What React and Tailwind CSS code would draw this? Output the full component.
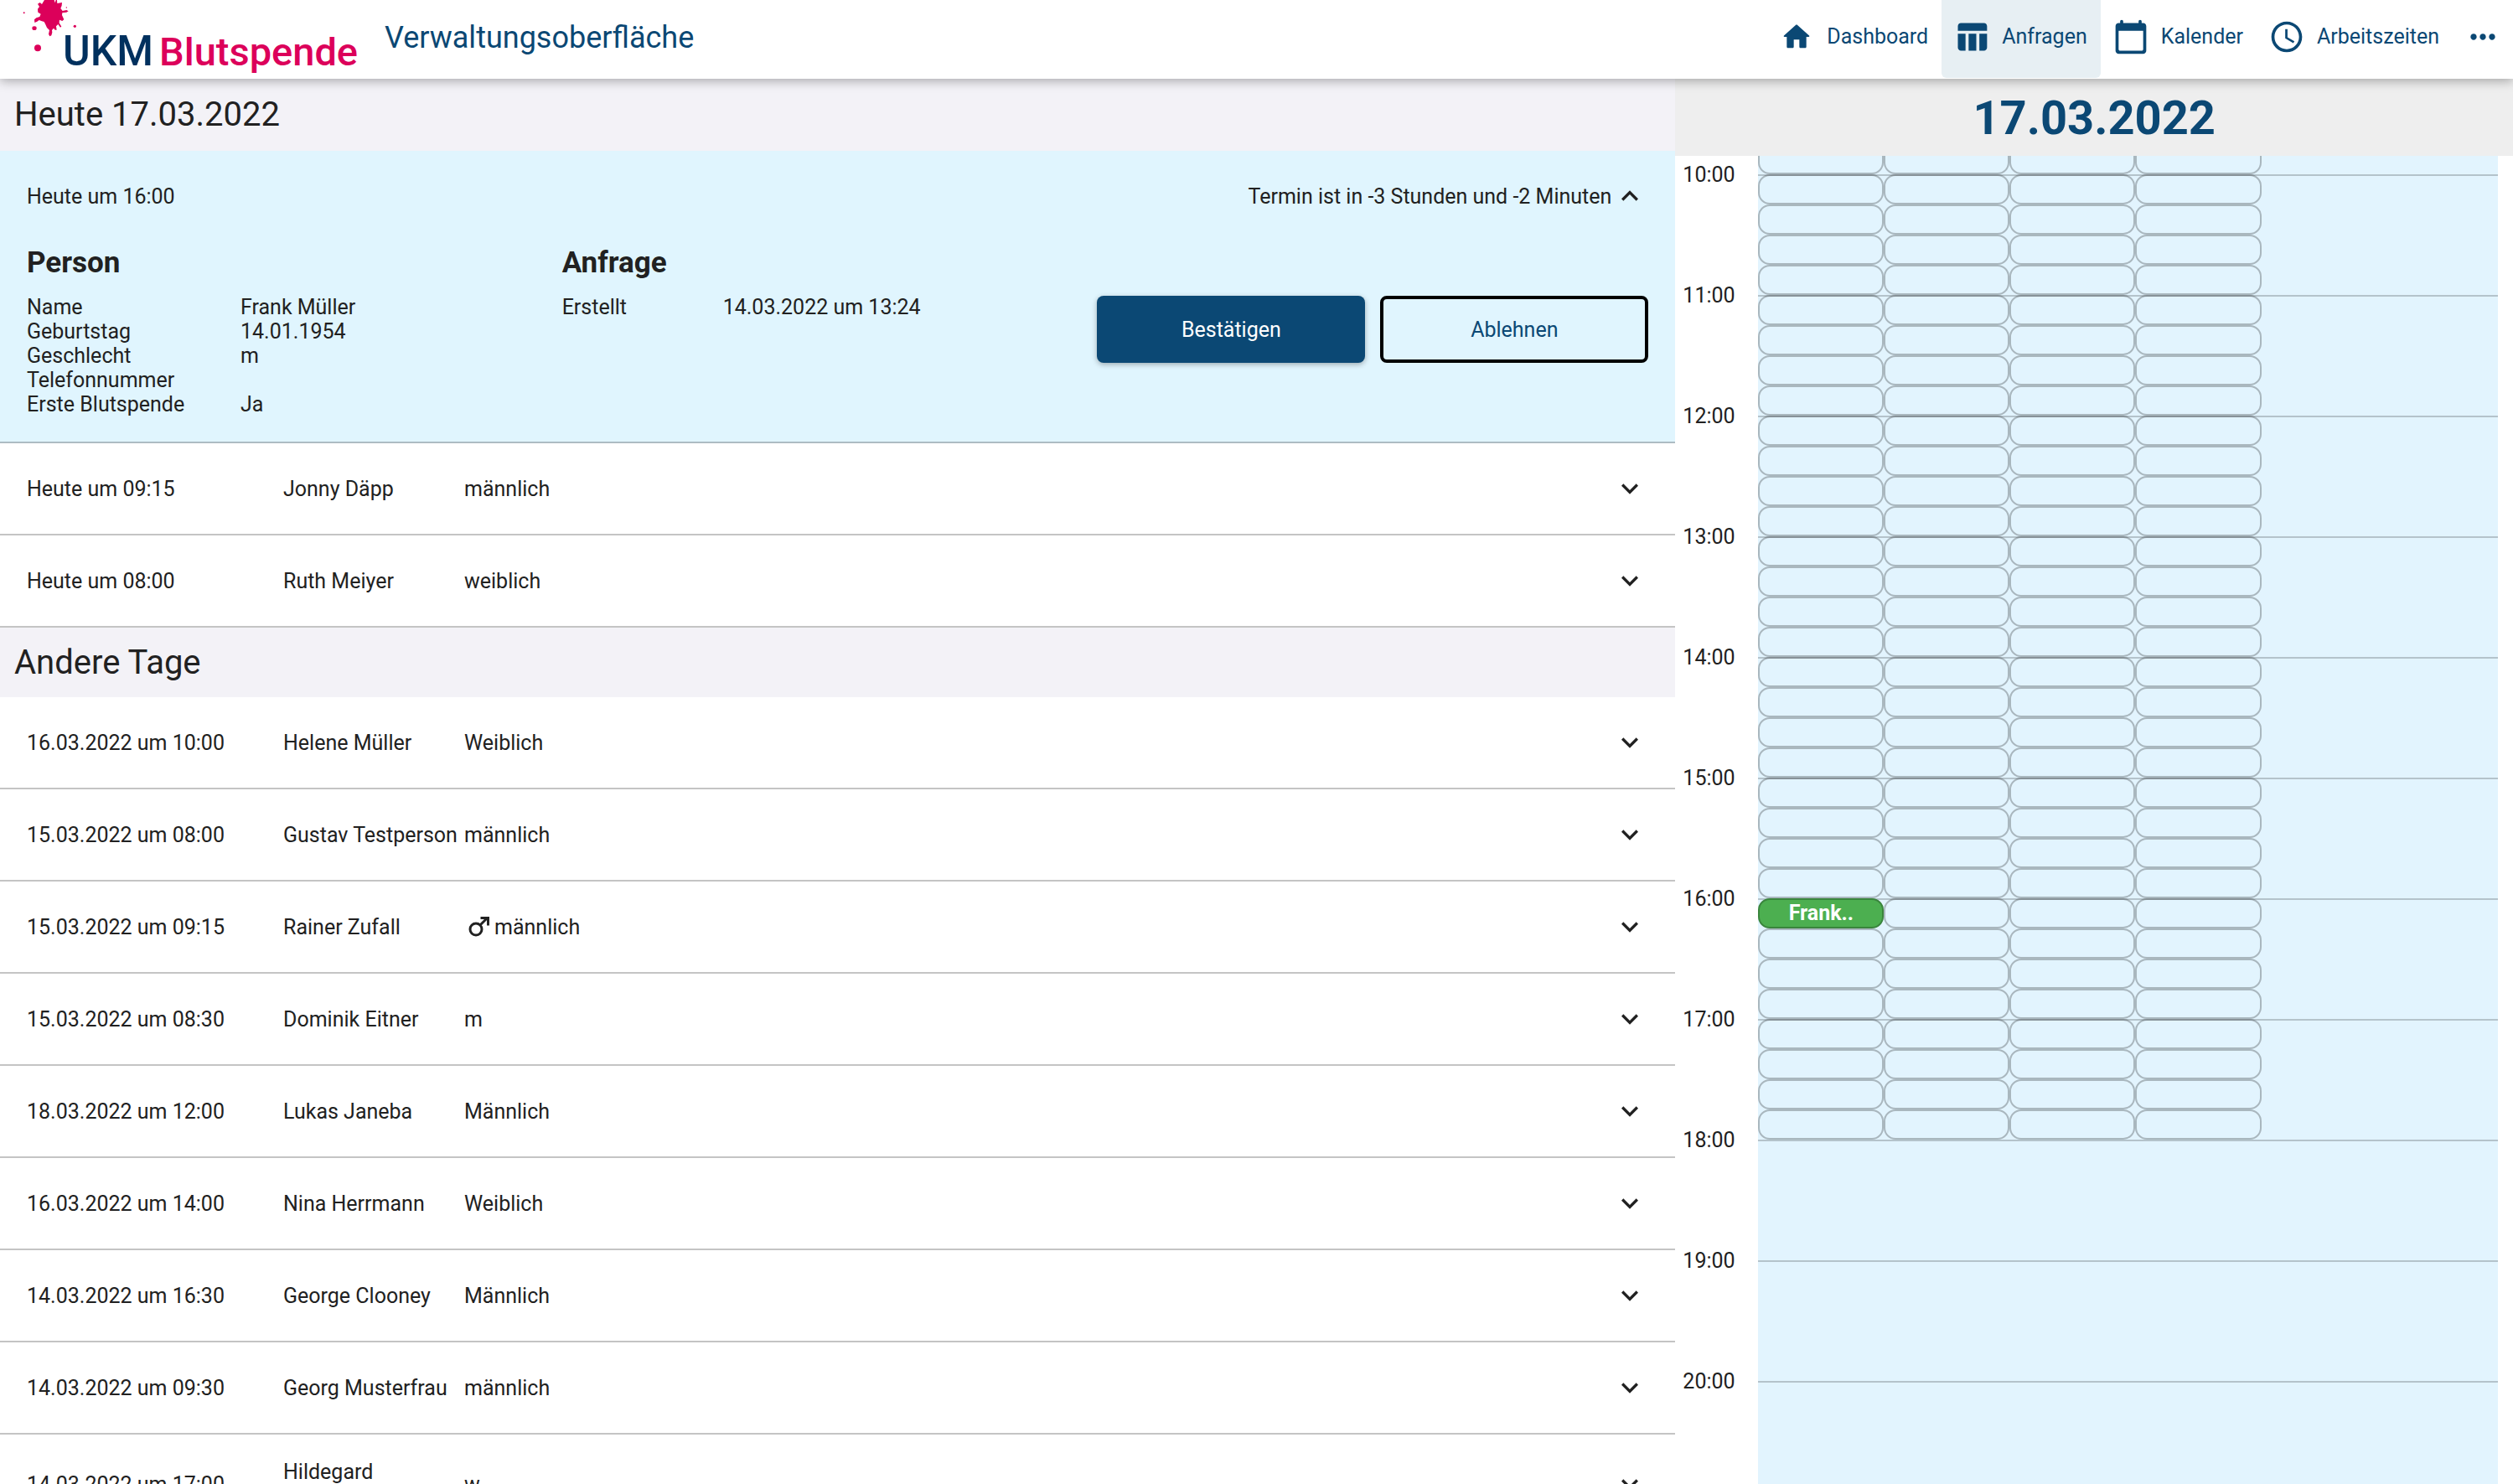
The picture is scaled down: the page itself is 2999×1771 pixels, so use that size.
import React from "react";
import { MdExpandMore, MdExpandLess, MdTableChart, MdSchedule, MdMoreHoriz } from "react-icons/md";

function Logo() {
  return (
    <svg width="430" height="94" viewBox="0 0 430 94" role="img" aria-label="UKM Blutspende">
      <g fill="#dc005a" transform="scale(0.3333)">
        <path d="M135 14L143 9L150 15L154 8L159 0H194L197 10L200 0H204L205 12L222 9L221 20L217 30L224 39L238 36L245 40L238 44L223 46L222 54L229 70L223 75L213 71L212 82L220 95L216 98L208 87L201 94L203 107L197 107L192 101L186 108L187 116L184 127L178 130L174 122L177 108L168 99L163 88L158 78L150 76L140 72L133 77L124 81L123 70L130 64L142 60L146 50L136 44L135 32L141 24Z" />
        <ellipse cx="123" cy="101" rx="8" ry="7" />
        <circle cx="135" cy="172" r="12" />
        <circle cx="268" cy="94" r="5" />
        <circle cx="86" cy="46" r="3" />
        <circle cx="238" cy="27" r="2" />
      </g>
      <g fontFamily="Roboto, sans-serif" fontWeight="500">
        <text x="75" y="78" fill="#00305e" fontSize="50">UKM</text>
        <text x="190" y="78" fill="#dc005a" fontSize="47">Blutspende</text>
      </g>
    </svg>
  );
}

function HomeIcon() {
  return (
    <span className="flex w-11 justify-center">
      <svg className="size-10" viewBox="0 0 24 24" fill="currentColor" aria-hidden="true">
        <path d="M10 19v-5h4v5c0 .55.45 1 1 1h3c.55 0 1-.45 1-1v-7h1.7c.46 0 .68-.57.33-.87L12.67 3.6c-.38-.34-.96-.34-1.34 0l-8.36 7.53c-.34.3-.13.87.33.87H5v7c0 .55.45 1 1 1h3c.55 0 1-.45 1-1z" />
      </svg>
    </span>
  );
}

function CalendarIcon() {
  return (
    <svg className="size-11" viewBox="0 0 24 24" fill="currentColor" aria-hidden="true">
      <path d="M20 3h-1V2c0-.55-.45-1-1-1s-1 .45-1 1v1H7V2c0-.55-.45-1-1-1s-1 .45-1 1v1H4c-1.1 0-2 .9-2 2v16c0 1.1.9 2 2 2h16c1.1 0 2-.9 2-2V5c0-1.1-.9-2-2-2zm-1 18H5c-.55 0-1-.45-1-1V8h16v12c0 .55-.45 1-1 1z" />
    </svg>
  );
}

const nav = [
  { label: "Dashboard", icon: <HomeIcon /> },
  { label: "Anfragen", icon: <MdTableChart className="size-11" />, active: true },
  { label: "Kalender", icon: <CalendarIcon /> },
  { label: "Arbeitszeiten", icon: <MdSchedule className="size-11" /> },
];

function Header() {
  return (
    <header className="relative z-10 flex h-[94px] shrink-0 items-center bg-white text-[#0b4874] shadow-[0_3px_12px_rgba(0,0,0,0.3)]">
      <a href="#start" className="shrink-0"><Logo /></a>
      <span className="ml-[29px] pb-1 text-[36px] leading-[42px]">Verwaltungsoberfläche</span>
      <nav className="ml-auto flex self-stretch">
        {nav.map((n) => (
          <a
            key={n.label}
            href={"#" + n.label.toLowerCase()}
            aria-current={n.active ? "page" : undefined}
            className={
              n.active
                ? "mb-px flex items-center gap-3.5 rounded-b-md bg-[#e7eff3] pr-4 pb-1.5 pl-3.5"
                : "mb-px flex items-center gap-3.5 pr-4 pb-1.5 pl-3.5"
            }
          >
            {n.icon}
            {n.label}
          </a>
        ))}
        <button type="button" aria-label="Mehr" className="mb-px px-3.5 pb-1.5">
          <MdMoreHoriz className="size-11" />
        </button>
      </nav>
    </header>
  );
}

const today = [
  { when: "Heute um 09:15", name: "Jonny Däpp", gender: "männlich" },
  { when: "Heute um 08:00", name: "Ruth Meiyer", gender: "weiblich" },
];

const others = [
  { when: "16.03.2022 um 10:00", name: "Helene Müller", gender: "Weiblich" },
  { when: "15.03.2022 um 08:00", name: "Gustav Testperson", gender: "männlich" },
  { when: "15.03.2022 um 09:15", name: "Rainer Zufall", gender: "männlich", male: true },
  { when: "15.03.2022 um 08:30", name: "Dominik Eitner", gender: "m" },
  { when: "18.03.2022 um 12:00", name: "Lukas Janeba", gender: "Männlich" },
  { when: "16.03.2022 um 14:00", name: "Nina Herrmann", gender: "Weiblich" },
  { when: "14.03.2022 um 16:30", name: "George Clooney", gender: "Männlich" },
  { when: "14.03.2022 um 09:30", name: "Georg Musterfrau", gender: "männlich" },
  { when: "14.03.2022 um 17:00", name: "Hildegard Musterfrau", gender: "w" },
];

function MaleIcon() {
  return (
    <svg className="ml-1 size-8" viewBox="0 0 32 32" fill="none" stroke="currentColor" strokeWidth="3" aria-hidden="true">
      <circle cx="10" cy="19" r="7" />
      <path d="M15 14L24 5M15.500 5.500H24.500V14.500" />
    </svg>
  );
}

function Row({ when, name, gender, male }) {
  return (
    <button
      type="button"
      aria-expanded="false"
      className="flex min-h-[110px] w-full items-center border-b-2 border-[#c4c4c4] py-[30px] pr-[34px] pl-8 text-left"
    >
      <span className="w-[306px] shrink-0">{when}</span>
      <span className="w-[216px] shrink-0">{name}</span>
      <span className="flex items-center">
        {male && <MaleIcon />}
        {gender}
      </span>
      <MdExpandMore className="ml-auto size-10" />
    </button>
  );
}

function SectionTitle({ children }) {
  return (
    <h2 className="flex h-[83px] shrink-0 items-center bg-[#f3f2f7] px-[17px] text-[40px] leading-[46px] first:h-[86px]">{children}</h2>
  );
}

const person = [
  ["Name", "Frank Müller"],
  ["Geburtstag", "14.01.1954"],
  ["Geschlecht", "m"],
  ["Telefonnummer", ""],
  ["Erste Blutspende", "Ja"],
];

function OpenRequest() {
  return (
    <article className="border-b-2 border-[#adbcc3] bg-[#e0f5fe] pb-[30px]">
      <button type="button" aria-expanded="true" className="flex h-[108px] w-full items-center justify-between pr-[34px] pl-8">
        <span>Heute um 16:00</span>
        <span className="flex items-center gap-0.5">
          Termin ist in -3 Stunden und -2 Minuten
          <MdExpandLess className="size-10" />
        </span>
      </button>
      <div className="flex px-8">
        <section className="w-[33%]">
          <h3 className="pt-1 text-[35px] leading-[44px] font-bold">Person</h3>
          <dl className="mt-4 grid grid-cols-[255px_1fr]">
            {person.map(([k, v]) => (
              <React.Fragment key={k}>
                <dt>{k}</dt>
                <dd>{v}</dd>
              </React.Fragment>
            ))}
          </dl>
        </section>
        <section>
          <h3 className="pt-1 text-[35px] leading-[44px] font-bold">Anfrage</h3>
          <dl className="mt-4 grid grid-cols-[192px_1fr]">
            <dt>Erstellt</dt>
            <dd>14.03.2022 um 13:24</dd>
          </dl>
        </section>
        <div className="ml-auto flex gap-[18px] pt-[65px]">
          <button type="button" className="h-20 w-80 rounded-lg bg-[#0b4874] text-white shadow-[0_2px_6px_rgba(0,0,0,0.3)]">
            Bestätigen
          </button>
          <button type="button" className="h-20 w-80 rounded-lg border-4 border-black text-[#0b4874]">
            Ablehnen
          </button>
        </div>
      </div>
    </article>
  );
}

const hours = [10, 11, 12, 13, 14, 15, 16, 17, 18, 19, 20];

function Slot({ hour, quarter, column }) {
  if (hour === 16 && quarter === 0 && column === 0) {
    return (
      <button type="button" className="h-9 rounded-[14px] border-2 border-[#3a853d] bg-[#4caf50] leading-8 font-bold text-white">
        Frank..
      </button>
    );
  }
  return (
    <button
      type="button"
      aria-label={`${hour}:${String(quarter * 15).padStart(2, "0")}, Platz ${column + 1}`}
      className="h-9 rounded-[14px] border-2 border-black/25"
    />
  );
}

function DayPlan() {
  return (
    <section className="flex flex-1 flex-col">
      <h2 className="flex h-[92px] shrink-0 items-center justify-center bg-[#eeeeee] pt-0.5 text-[56px] leading-[68px] font-bold text-[#0b4874]">
        17.03.2022
      </h2>
      <div className="flex min-h-0 flex-1 overflow-hidden pr-[18px]">
        <div className="w-[99px] shrink-0 pt-2 pl-[9px]">
          {hours.map((h) => (
            <div key={h} className="h-36">{h}:00</div>
          ))}
        </div>
        <div className="flex-1 bg-[#e2f4fe]">
          <div className="grid grid-cols-[repeat(4,17%)]">
            {[0, 1, 2, 3].map((c) => (
              <button
                key={c}
                type="button"
                aria-label={`9:45, Platz ${c + 1}`}
                className="h-[22px] rounded-b-[14px] border-2 border-t-0 border-black/25"
              />
            ))}
          </div>
          {hours.map((h) => (
            <div key={h} className="grid h-36 grid-cols-[repeat(4,17%)] content-start shadow-[inset_0_2px_0_rgba(0,0,0,0.2)]">
              {h < 18 &&
                [0, 1, 2, 3].map((q) =>
                  [0, 1, 2, 3].map((c) => <Slot key={q + "-" + c} hour={h} quarter={q} column={c} />)
                )}
            </div>
          ))}
        </div>
      </div>
    </section>
  );
}

export default function App() {
  return (
    <div className="flex h-screen flex-col overflow-hidden bg-white font-['Roboto',sans-serif] text-[25px] leading-[29px] text-[#212121]">
      <Header />
      <main className="flex min-h-0 flex-1">
        <div className="w-2/3 overflow-hidden">
          <SectionTitle>Heute 17.03.2022</SectionTitle>
          <OpenRequest />
          {today.map((r) => <Row key={r.when + r.name} {...r} />)}
          <SectionTitle>Andere Tage</SectionTitle>
          {others.map((r) => <Row key={r.when + r.name} {...r} />)}
        </div>
        <DayPlan />
      </main>
    </div>
  );
}
